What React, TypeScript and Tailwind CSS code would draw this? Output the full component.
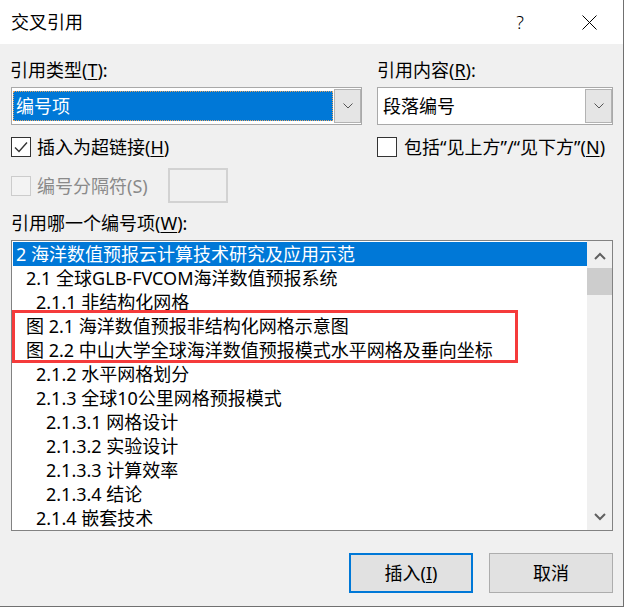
import React from "react";

const rows: { text: string; pl: string; sel?: boolean }[] = [
  { text: "2 海洋数值预报云计算技术研究及应用示范", pl: "pl-[3px]", sel: true },
  { text: "2.1 全球GLB-FVCOM海洋数值预报系统", pl: "pl-[13px]" },
  { text: "2.1.1 非结构化网格", pl: "pl-[23px]" },
  { text: "图 2.1 海洋数值预报非结构化网格示意图", pl: "pl-[13px]" },
  { text: "图 2.2 中山大学全球海洋数值预报模式水平网格及垂向坐标", pl: "pl-[13px]" },
  { text: "2.1.2 水平网格划分", pl: "pl-[23px]" },
  { text: "2.1.3 全球10公里网格预报模式", pl: "pl-[23px]" },
  { text: "2.1.3.1 网格设计", pl: "pl-[33px]" },
  { text: "2.1.3.2 实验设计", pl: "pl-[33px]" },
  { text: "2.1.3.3 计算效率", pl: "pl-[33px]" },
  { text: "2.1.3.4 结论", pl: "pl-[33px]" },
  { text: "2.1.4 嵌套技术", pl: "pl-[23px]" },
];

function ComboChevron() {
  return (
    <svg width="10" height="6" viewBox="0 0 10 6">
      <path d="M0.5 0.5 L5 5 L9.5 0.5" fill="none" stroke="#555" strokeWidth="1" />
    </svg>
  );
}

function ScrollChevron({ up }: { up?: boolean }) {
  return (
    <svg width="12" height="8" viewBox="0 0 12 8">
      <path
        d={up ? "M1 7 L6 2 L11 7" : "M1 1 L6 6 L11 1"}
        fill="none"
        stroke="#606060"
        strokeWidth="2"
      />
    </svg>
  );
}

export default function App() {
  return (
    <div className="w-[624px] h-[607px] bg-[#f0f0f0] border-r border-b border-[#707070] flex flex-col font-['Noto_Sans','Noto_Sans_CJK_SC',sans-serif] text-[18px] text-black">
      {/* Title bar */}
      <div className="h-[44px] shrink-0 bg-white flex items-center pl-[11px] pr-[26px]">
        <span className="leading-[24px]">交叉引用</span>
        <span className="ml-auto mr-[52px] w-[20px] text-center leading-[24px] font-light">?</span>
        <svg width="15" height="15" viewBox="0 0 15 15">
          <path d="M0.5 0.5 L14.5 14.5 M14.5 0.5 L0.5 14.5" stroke="#000" strokeWidth="1" />
        </svg>
      </div>

      {/* Body */}
      <div className="flex-1 flex flex-col pl-[11px] pr-[10px] pt-[14px]">
        <div className="grid grid-cols-[351px_236px] gap-x-[15px]">
          <div className="flex flex-col">
            <div className="leading-[24px] -ml-[1px]">
              引用类型(<span className="underline underline-offset-2">T</span>):
            </div>
            <div className="mt-[5px] h-[38px] border border-[#a9a9a9] bg-white flex">
              <div className="flex-1 ml-[1px] my-[3px] bg-[#0078d7] border border-dotted border-[#e3a462] text-white pl-[2px] flex items-center leading-[24px]">
                编号项
              </div>
              <div className="w-[27px] my-[1px] ml-[1px] bg-[#e5e5e5] border border-[#b3b3b3] flex items-center justify-center">
                <ComboChevron />
              </div>
            </div>
          </div>
          <div className="flex flex-col">
            <div className="leading-[24px]">
              引用内容(<span className="underline underline-offset-2">R</span>):
            </div>
            <div className="mt-[5px] h-[38px] border border-[#a9a9a9] bg-white flex">
              <div className="flex-1 pl-[5px] flex items-center leading-[24px]">段落编号</div>
              <div className="w-[27px] my-[1px] ml-[1px] bg-[#e5e5e5] border border-[#b3b3b3] flex items-center justify-center">
                <ComboChevron />
              </div>
            </div>
          </div>
        </div>

        {/* Checkbox row */}
        <div className="mt-[12px] grid grid-cols-[351px_236px] gap-x-[15px]">
          <div className="flex items-center gap-[6px] h-[20px]">
            <div className="w-[20px] h-[20px] border border-[#333] bg-white flex items-center justify-center">
              <svg width="18" height="18" viewBox="0 0 18 18">
                <path d="M3 9.5 L7 13.5 L15 4.5" fill="none" stroke="#333" strokeWidth="1.4" />
              </svg>
            </div>
            <span className="leading-[24px]">
              插入为超链接(<span className="underline underline-offset-2">H</span>)
            </span>
          </div>
          <div className="flex items-center gap-[7px] h-[20px]">
            <div className="w-[20px] h-[20px] border border-[#333] bg-white" />
            <span className="leading-[24px] whitespace-nowrap">
              包括“见上方”/“见下方”(<span className="underline underline-offset-2">N</span>)
            </span>
          </div>
        </div>

        {/* Disabled row */}
        <div className="mt-[11px] flex items-center h-[35px]">
          <div className="w-[157px] flex items-center gap-[6px]">
            <div className="w-[20px] h-[20px] border border-[#cccccc] bg-[#f3f3f3]" />
            <span className="leading-[24px] text-[#8a8a8a]">编号分隔符(S)</span>
          </div>
          <div className="w-[60px] h-[35px] border-2 border-[#d2d2d2] bg-[#f0f0f0]" />
        </div>

        <div className="mt-[8px] leading-[24px]">
          引用哪一个编号项(<span className="underline underline-offset-2">W</span>):
        </div>

        {/* List box */}
        <div className="relative mt-[5px] h-[291px] border border-[#828282] bg-white flex">
          <div className="flex-1 pt-[1px] pl-[1px] flex flex-col">
            {rows.map((r, i) => (
              <div
                key={i}
                className={`h-[24px] shrink-0 flex items-center whitespace-nowrap leading-[24px] ${r.pl} ${
                  r.sel ? "bg-[#0078d7] text-white" : ""
                }`}
              >
                {r.text}
              </div>
            ))}
          </div>
          <div className="w-[25px] bg-[#f0f0f0] flex flex-col">
            <div className="h-[27px] flex items-center justify-center pt-[3px]">
              <ScrollChevron up />
            </div>
            <div className="h-[27px] bg-[#cdcdcd]" />
            <div className="flex-1" />
            <div className="h-[27px] flex items-center justify-center">
              <ScrollChevron />
            </div>
          </div>
          <div className="absolute left-0 top-[69px] w-[506px] h-[53px] border-[3px] border-[#f53b3b]" />
        </div>

        {/* Buttons */}
        <div className="mt-[22px] flex justify-end gap-[16px]">
          <div className="w-[124px] h-[40px] border-2 border-[#0078d7] bg-[#e1e1e1] flex items-center justify-center leading-[24px]">
            插入(<span className="underline underline-offset-2">I</span>)
          </div>
          <div className="w-[124px] h-[40px] border border-[#adadad] bg-[#e1e1e1] flex items-center justify-center leading-[24px]">
            取消
          </div>
        </div>
      </div>
    </div>
  );
}
